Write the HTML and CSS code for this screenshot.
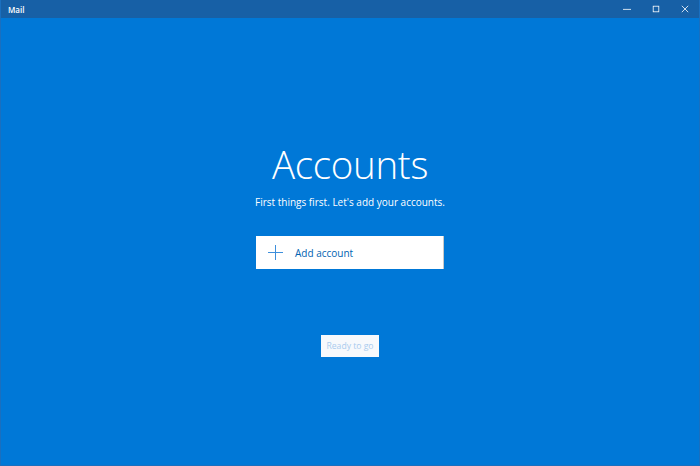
FILE: index.html
```html
<!DOCTYPE html>
<html lang="en">
<head>
    <meta charset="UTF-8">
    <meta name="viewport" content="width=device-width, initial-scale=1.0">
    <title>Mail</title>
    <link rel="stylesheet" href="styles.css">
</head>
<body>
    <div class="window">
        <div class="title-bar">
            <span class="app-name">Mail</span>
            <div class="window-controls">
                <span class="win-btn">
                    <svg width="10" height="10" viewBox="0 0 10 10"><path d="M0 5.5h10" stroke="#fff" stroke-width="1"/></svg>
                </span>
                <span class="win-btn">
                    <svg width="10" height="10" viewBox="0 0 10 10"><rect x="1.5" y="1.5" width="7" height="7" fill="none" stroke="#fff" stroke-width="1"/></svg>
                </span>
                <span class="win-btn">
                    <svg width="10" height="10" viewBox="0 0 10 10"><path d="M1 1l8 8M9 1l-8 8" stroke="#fff" stroke-width="1"/></svg>
                </span>
            </div>
        </div>

        <div class="content">
            <h1 class="heading">Accounts</h1>
            <p class="subtitle">First things first. Let's add your accounts.</p>

            <button class="add-account">
                <span class="plus"></span>
                <span>Add account</span>
            </button>

            <button class="ready-btn" disabled>Ready to go</button>
        </div>
    </div>
</body>
</html>
```

FILE: styles.css
```css
* {
    margin: 0;
    padding: 0;
    box-sizing: border-box;
    font-family: 'Open Sans', 'Noto Sans', sans-serif;
}

body {
    width: 700px;
    height: 466px;
    overflow: hidden;
    background: #0078d7;
}

.window {
    height: 466px;
    display: flex;
    flex-direction: column;
    border: 1px solid #1a6fbf;
    border-top: none;
}

.title-bar {
    height: 18px;
    background: #1760a6;
    display: flex;
    align-items: center;
    justify-content: space-between;
    color: #fff;
    flex-shrink: 0;
}

.app-name {
    font-size: 8px;
    font-weight: 600;
    padding-left: 7px;
}

.window-controls {
    display: flex;
    height: 100%;
}

.win-btn {
    width: 29px;
    height: 100%;
    display: flex;
    align-items: center;
    justify-content: center;
}

.win-btn svg {
    width: 8px;
    height: 8px;
}

.content {
    flex: 1;
    display: flex;
    flex-direction: column;
    align-items: center;
    padding-top: 123px;
}

.heading {
    font-size: 38.5px;
    font-weight: 300;
    color: #fff;
    line-height: 46px;
    letter-spacing: -0.3px;
}

.subtitle {
    font-size: 10px;
    color: #fff;
    margin-top: 7px;
    line-height: 16px;
}

.add-account {
    width: 188px;
    height: 33px;
    margin-top: 26px;
    background: #fff;
    border: none;
    border-right: 1px solid #c8c8c8;
    display: flex;
    align-items: center;
    padding-left: 12px;
    gap: 12px;
    color: #0063b1;
    font-size: 10px;
    text-align: left;
}

.plus {
    position: relative;
    width: 15px;
    height: 15px;
}

.plus::before,
.plus::after {
    content: "";
    position: absolute;
    background: #3d8fdc;
}

.plus::before {
    left: 7px;
    top: 0;
    width: 1px;
    height: 15px;
}

.plus::after {
    left: 0;
    top: 7px;
    width: 15px;
    height: 1px;
}

.ready-btn {
    margin-top: 66px;
    width: 58px;
    height: 22px;
    background: #f7f9fc;
    border: none;
    color: #a9cbee;
    font-size: 8.6px;
}
```
